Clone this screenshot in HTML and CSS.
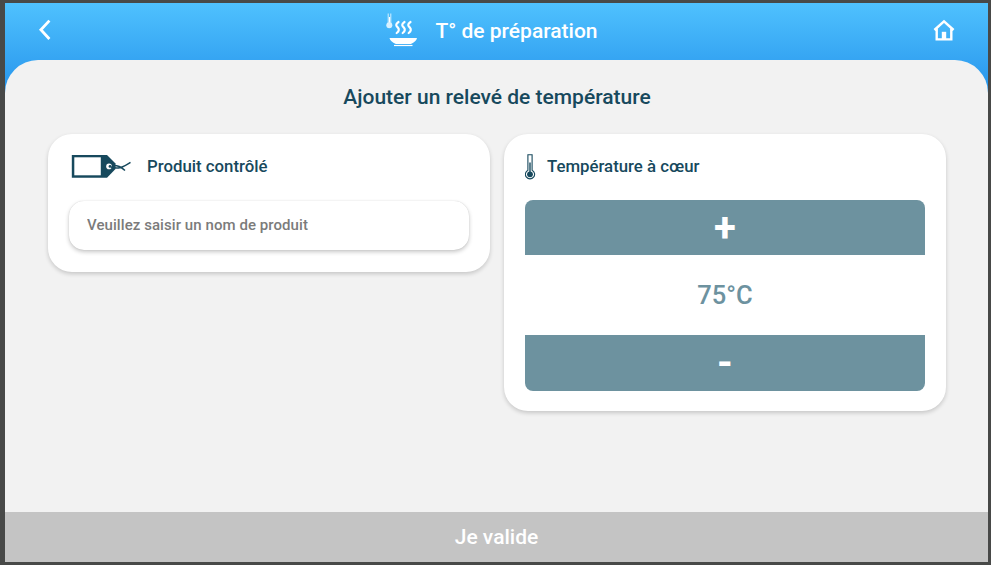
FILE: index.html
```html
<!DOCTYPE html>
<html lang="fr">
<head>
<meta charset="utf-8">
<title>T° de préparation</title>
<link rel="stylesheet" href="styles.css">
</head>
<body>
<div class="app">
  <header class="header">
    <button class="nav-button" aria-label="Retour">
      <svg width="14" height="22" viewBox="0 0 14 22"><path d="M11.400 1.600 2.900 10.800l8.500 9.200" fill="none" stroke="#fff" stroke-width="2.800"/></svg>
    </button>
    <div class="header-title">
      <svg width="34" height="36" viewBox="0 0 34 36">
        <path d="M3.200 1.500v10M5.800 1.500v10" stroke="#d3efff" stroke-width="1" fill="none"/>
        <path d="M4.500 5v8" stroke="#fff" stroke-width="1.200"/>
        <circle cx="4.300" cy="13.300" r="3" fill="#d8f1ff"/>
        <g fill="none" stroke="#fff" stroke-width="2.200" stroke-linecap="round">
          <path d="M13.500 10c-3.400 2.200-2.400 3.800-.8 5.400s1.600 3.600-1 5.600"/>
          <path d="M19.500 10c-3.400 2.200-2.400 3.800-.8 5.400s1.600 3.600-1 5.600"/>
          <path d="M25.500 10c-3.400 2.200-2.400 3.800-.8 5.400s1.600 3.600-1 5.600"/>
        </g>
        <path d="M4.500 26h27.500c-.3 2.200-2.700 4.500-6.200 6H10.800C7.300 30.500 4.900 28.200 4.500 26z" fill="#fff"/>
        <path d="M9 33.500h18.500" stroke="#fff" stroke-width="1.200"/>
      </svg>
      <h1>T° de préparation</h1>
    </div>
    <button class="nav-button" aria-label="Accueil">
      <svg width="22" height="23" viewBox="0 0 22 23"><path d="M1.400 11 11 2.400l9.600 8.600M3.700 9.500v10.900h14.600V9.500" fill="none" stroke="#fff" stroke-width="2.400"/><path d="M8.800 21v-8.200h4.400V21z" fill="#fff"/></svg>
    </button>
  </header>
  <main class="content">
    <h2>Ajouter un relevé de température</h2>
    <div class="cards">
      <section class="card">
        <div class="card-head">
          <svg width="62" height="24" viewBox="0 0 62 24">
            <path d="M.8 0h35.200L44.500 8.500v5.500L36 22.800H.8z" fill="#17495d"/>
            <path d="M3.300 2.300h26.500v18H3.300z" fill="#fff"/>
            <circle cx="38" cy="11.400" r="2.800" fill="#fff"/>
            <circle cx="39" cy="11.400" r="1.400" fill="#17495d"/>
            <path d="M40 12c7 2.300 12 .5 19.500-4.600M41 10.500c6-.5 9 1.500 13 5" fill="none" stroke="#17495d" stroke-width="1.500"/>
          </svg>
          <h3>Produit contrôlé</h3>
        </div>
        <input class="product" type="text" placeholder="Veuillez saisir un nom de produit">
      </section>
      <section class="card">
        <div class="card-head temperature-head">
          <svg width="12" height="26" viewBox="0 0 12 26">
            <path d="M2.900 .7h4.200v15.500a4.600 4.600 0 1 1-4.200 0z" fill="#fff" stroke="#17495d" stroke-width="1.100"/>
            <path d="M5 8.500v10" stroke="#17495d" stroke-width="1.400"/>
            <circle cx="5" cy="20.300" r="2.900" fill="#17495d"/>
          </svg>
          <h3>Température à cœur</h3>
        </div>
        <div class="stepper">
          <button class="step plus">+</button>
          <output class="value">75°C</output>
          <button class="step minus">-</button>
        </div>
      </section>
    </div>
  </main>
  <button class="submit">Je valide</button>
</div>
</body>
</html>
```
FILE: styles.css
```css
* {
  box-sizing: border-box;
}

body {
  margin: 0;
  height: 565px;
  padding: 3px 3px 3px 5px;
  background: #484948;
  font-family: Roboto, "Liberation Sans", sans-serif;
  font-weight: 500;
  color: #17495d;
}

button,
input {
  font: inherit;
  border: 0;
  padding: 0;
}

h1,
h2,
h3 {
  margin: 0;
  font-weight: 500;
  white-space: nowrap;
}

svg {
  display: block;
}

.app {
  height: 559px;
  display: flex;
  flex-direction: column;
  background: linear-gradient(#4fc1fe 0, #2b99ee 80px);
}

.header {
  height: 57px;
  flex: none;
  display: flex;
  justify-content: space-between;
  align-items: center;
  padding: 0 33px 3px;
}

.nav-button {
  width: 22px;
  display: flex;
  background: none;
}

.header-title {
  display: flex;
  align-items: center;
  gap: 16px;
  margin-right: 10px;
  color: #fff;
}

.header-title h1 {
  padding-top: 2px;
  font-size: 21px;
  line-height: 24px;
}

.content {
  flex: 1;
  padding: 23px 42px 0 43px;
  border-radius: 33px 33px 0 0;
  background: #f2f2f2;
}

.content h2 {
  text-align: center;
  font-size: 21px;
  line-height: 28px;
}

.cards {
  display: grid;
  grid-template-columns: 1fr 1fr;
  gap: 14px;
  align-items: start;
  margin-top: 23px;
}

.card {
  padding: 20px 21px;
  border-radius: 24px;
  background: #fff;
  box-shadow: 0 2px 4px rgba(0, 0, 0, .18);
}

.card-head {
  height: 26px;
  display: flex;
  align-items: center;
  gap: 14px;
  padding-left: 2px;
}

.temperature-head {
  gap: 10px;
  padding-left: 0;
}

.card-head h3 {
  padding-bottom: 2px;
  font-size: 16.8px;
  line-height: 24px;
}

.product {
  display: block;
  width: 100%;
  height: 49px;
  margin-top: 21px;
  margin-bottom: 2px;
  padding: 0 18px 2px;
  border-radius: 15px;
  background: #fff;
  box-shadow: 0 2px 4px rgba(0, 0, 0, .22), 0 0 1px rgba(0, 0, 0, .18);
  font-size: 15px;
  letter-spacing: .07px;
}

.product::placeholder {
  color: #7b7b7b;
  opacity: 1;
}

.stepper {
  display: grid;
  grid-template-rows: 55px 80px 56px;
  margin-top: 20px;
}

.step {
  background: #6d929f;
  color: #fff;
  font-size: 40px;
  font-weight: 700;
  line-height: 54px;
}

.plus {
  border-radius: 8px 8px 0 0;
}

.minus {
  border-radius: 0 0 8px 8px;
}

.value {
  text-align: center;
  color: #6d929f;
  font-size: 25.5px;
  line-height: 80px;
}

.submit {
  height: 50px;
  flex: none;
  background: #c4c4c4;
  color: #fff;
  font-size: 21px;
}
```
